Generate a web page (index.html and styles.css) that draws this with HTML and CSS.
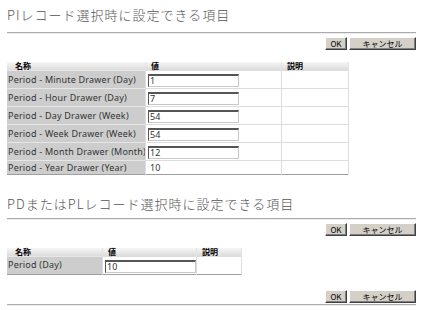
FILE: index.html
```html
<!DOCTYPE html>
<html lang="ja">
<head>
    <meta charset="UTF-8">
    <title>項目設定</title>
    <link rel="stylesheet" href="styles.css">
</head>
<body>
    <h2 class="title">PIレコード選択時に設定できる項目</h2>
    <hr>
    <div class="actions">
        <button class="btn btn-ok">OK</button>
        <button class="btn btn-cancel">キャンセル</button>
    </div>

    <table class="props props-wide">
        <tr>
            <th class="col-name">名称</th>
            <th class="col-value">値</th>
            <th class="col-desc">説明</th>
        </tr>
        <tr>
            <td class="label">Period - Minute Drawer (Day)</td>
            <td><input class="field" type="text" value="1"></td>
            <td></td>
        </tr>
        <tr>
            <td class="label">Period - Hour Drawer (Day)</td>
            <td><input class="field" type="text" value="7"></td>
            <td></td>
        </tr>
        <tr>
            <td class="label">Period - Day Drawer (Week)</td>
            <td><input class="field" type="text" value="54"></td>
            <td></td>
        </tr>
        <tr>
            <td class="label">Period - Week Drawer (Week)</td>
            <td><input class="field" type="text" value="54"></td>
            <td></td>
        </tr>
        <tr>
            <td class="label">Period - Month Drawer (Month)</td>
            <td><input class="field" type="text" value="12"></td>
            <td></td>
        </tr>
        <tr class="short">
            <td class="label">Period - Year Drawer (Year)</td>
            <td class="plain">10</td>
            <td></td>
        </tr>
    </table>

    <h2 class="title title-second">PDまたはPLレコード選択時に設定できる項目</h2>
    <hr>
    <div class="actions">
        <button class="btn btn-ok">OK</button>
        <button class="btn btn-cancel">キャンセル</button>
    </div>

    <table class="props props-narrow">
        <tr>
            <th class="col-name">名称</th>
            <th class="col-value">値</th>
            <th class="col-desc">説明</th>
        </tr>
        <tr class="top">
            <td class="label">Period (Day)</td>
            <td><input class="field" type="text" value="10"></td>
            <td></td>
        </tr>
    </table>

    <div class="actions actions-bottom">
        <button class="btn btn-ok">OK</button>
        <button class="btn btn-cancel">キャンセル</button>
    </div>
    <hr>
</body>
</html>
```

FILE: styles.css
```css
body {
    margin: 0;
    padding: 0 8px 0 7px;
    background: #fff;
    font-family: "Noto Sans", "Noto Sans CJK JP", sans-serif;
    color: #222;
}

.title {
    margin: 5px 0 0 0;
    padding-bottom: 7px;
    font-family: "Noto Sans CJK JP", sans-serif;
    font-weight: 300;
    font-size: 13px;
    line-height: 20px;
    letter-spacing: 1px;
    color: #555;
}

.title-second {
    margin-top: 19px;
    padding-bottom: 4px;
}

hr {
    margin: 0;
    height: 0;
    border: 0;
    border-top: 1px solid #aaa;
    border-bottom: 1px solid #eee;
}

.actions {
    display: flex;
    justify-content: flex-end;
    gap: 2px;
    padding-top: 3px;
}

.actions-bottom {
    padding-top: 15px;
    padding-bottom: 1px;
}

.btn {
    height: 13px;
    padding: 0;
    margin: 0;
    background: #d4d0c8;
    border: 1px solid;
    border-color: #fff #404040 #404040 #fff;
    box-shadow: inset -1px -1px 0 #808080;
    font-family: "Noto Sans CJK JP", sans-serif;
    font-size: 8px;
    line-height: 10px;
    color: #000;
}

.btn-ok {
    width: 22px;
}

.btn-cancel {
    width: 67px;
}

.props {
    margin-top: 12px;
    border-collapse: collapse;
    table-layout: fixed;
    border-right: 1px solid #a0a0a0;
    border-bottom: 1px solid #a0a0a0;
}

.props-wide {
    width: 342px;
}

.props-wide .col-name { width: 130px; }
.props-wide .col-value { width: 130px; }

.props-narrow {
    width: 235px;
}

.props-narrow .col-name { width: 87px; }
.props-narrow .col-value { width: 88px; }

.props th {
    height: 8px;
    padding: 0 0 0 8px;
    background: linear-gradient(#f6f6f6, #dcdcdc);
    border-right: 1px solid #e4e4e4;
    font-family: "Noto Sans CJK JP", sans-serif;
    font-size: 8px;
    font-weight: bold;
    line-height: 8px;
    text-align: left;
    color: #000;
}

.props th.col-value,
.props th.col-desc {
    padding-left: 5px;
}

.props td {
    height: 17px;
    padding: 0;
    border-top: 1px solid #ddd;
    border-right: 1px solid #ddd;
    font-size: 9px;
    letter-spacing: 0.2px;
    color: #333;
    vertical-align: middle;
}

.props tr.short td {
    height: 13px;
}

.props tr.top td.label {
    vertical-align: top;
    padding-top: 1px;
    height: 16px;
}

.props td.label {
    padding-left: 1px;
    background: #cdcdcd;
    border-top-color: #e6e6e6;
    white-space: nowrap;
    overflow: hidden;
}

.props td.plain {
    padding-left: 4px;
}

.field {
    display: block;
    box-sizing: border-box;
    width: 91px;
    height: 13px;
    margin: 1px 0 0 2px;
    padding: 0 0 0 1px;
    border: 1px solid #c8c8c8;
    border-top: 2px solid #555;
    border-left: 1px solid #555;
    font-family: "Noto Sans", sans-serif;
    font-size: 9px;
    line-height: 10px;
    color: #333;
}
```
